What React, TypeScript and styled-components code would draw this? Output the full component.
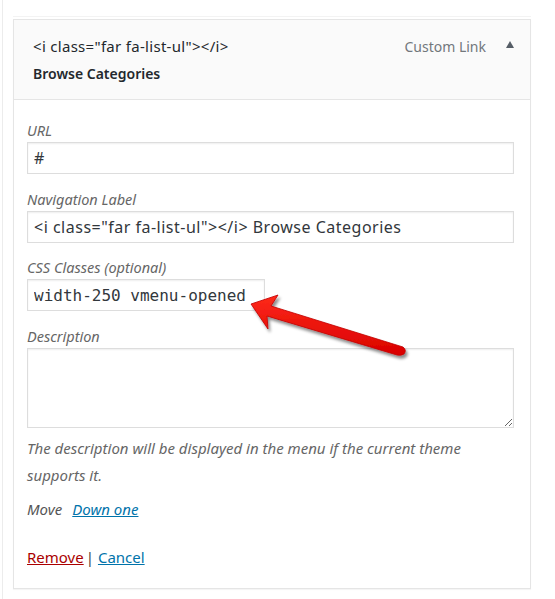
import React from 'react'
import styled, { createGlobalStyle } from 'styled-components'

const GlobalStyle = createGlobalStyle`
  html, body {
    margin: 0;
    padding: 0;
    background: #fff;
  }
  body {
    font-family: "Noto Sans", "Open Sans", sans-serif;
    color: #23282d;
  }
`

const Page = styled.div`
  width: 555px;
  height: 599px;
  box-sizing: border-box;
  border-left: 1px solid #ececec;
  margin-left: 2px;
  padding: 16px 0 0 10px;
`

const TopRule = styled.div`
  width: 518px;
  border-top: 1px solid #f3f3f3;
  margin-bottom: 2px;
`

const Card = styled.div`
  position: relative;
  width: 518px;
  box-sizing: border-box;
  border: 1px solid #e5e5e5;
  box-shadow: 0 1px 1px rgba(0, 0, 0, 0.04);
  background: #fff;
`

const Header = styled.div`
  display: flex;
  justify-content: space-between;
  align-items: flex-start;
  background: #fafafa;
  border-bottom: 1px solid #e5e5e5;
  padding: 13px 16px 12px 19px;
`

const Title = styled.div`
  font-size: 14px;
  line-height: 27px;
  font-weight: 600;
  color: #23282d;

  span {
    display: block;
    font-weight: 400;
    font-size: 15px;
    letter-spacing: 0.3px;
  }
`

const Meta = styled.div`
  display: flex;
  align-items: center;
  gap: 20px;
  font-size: 14px;
  line-height: 27px;
  color: #72777c;
`

const Caret = styled.span`
  width: 0;
  height: 0;
  border-left: 4.5px solid transparent;
  border-right: 4.5px solid transparent;
  border-bottom: 7px solid #555d66;
  margin-bottom: 4px;
`

const Body = styled.div`
  padding: 20px 16px 17px 13px;
`

const Field = styled.div<{ $gap?: number }>`
  display: flex;
  flex-direction: column;
  align-items: flex-start;
  margin-bottom: ${p => p.$gap ?? 15}px;
`

const Label = styled.label`
  font-size: 14.5px;
  font-style: italic;
  line-height: 20px;
  color: #666;
  margin-bottom: 2px;
`

const TextInput = styled.input<{ $mono?: boolean; $width?: number }>`
  box-sizing: border-box;
  width: ${p => p.$width ?? 487}px;
  height: 32px;
  border: 1px solid #ddd;
  box-shadow: inset 0 1px 2px rgba(0, 0, 0, 0.07);
  padding: 0 6px;
  font-family: ${p => (p.$mono ? '"DejaVu Sans Mono", "Liberation Mono", monospace' : '"Noto Sans", sans-serif')};
  font-size: 16px;
  letter-spacing: ${p => (p.$mono ? 0 : 0.5)}px;
  color: #32373c;
  background: #fff;
  outline: none;
`

const TextArea = styled.textarea`
  box-sizing: border-box;
  width: 487px;
  height: 80px;
  border: 1px solid #ddd;
  box-shadow: inset 0 1px 2px rgba(0, 0, 0, 0.07);
  padding: 6px;
  font-family: "Noto Sans", sans-serif;
  font-size: 16px;
  color: #32373c;
  outline: none;
`

const Help = styled.p`
  margin: 7px 0 7px;
  width: 450px;
  font-size: 15px;
  font-style: italic;
  line-height: 27px;
  color: #666;
`

const MoveRow = styled.div`
  display: flex;
  gap: 10px;
  font-size: 15px;
  font-style: italic;
  line-height: 27px;
  color: #555;
`

const Link = styled.a<{ $danger?: boolean }>`
  color: ${p => (p.$danger ? '#a00' : '#0073aa')};
  text-decoration: underline;
  cursor: pointer;
`

const Actions = styled.div`
  display: flex;
  margin-top: 21px;
  font-size: 15px;
  line-height: 27px;
  color: #555;
`

const Sep = styled.span`
  margin: 0 4px 0 2px;
  color: #444;
`

const Arrow = styled.svg`
  position: absolute;
  left: 226px;
  top: 265px;
  overflow: visible;
  pointer-events: none;
`

const App = () => {
  return (
    <>
      <GlobalStyle />
      <Page>
        <TopRule />
        <Card>
          <Header>
            <Title>
              <span>{'<i class="far fa-list-ul"></i>'}</span>
              Browse Categories
            </Title>
            <Meta>
              Custom Link
              <Caret />
            </Meta>
          </Header>

          <Body>
            <Field>
              <Label>URL</Label>
              <TextInput defaultValue="#" />
            </Field>
            <Field $gap={14}>
              <Label>Navigation Label</Label>
              <TextInput defaultValue={'<i class="far fa-list-ul"></i> Browse Categories'} />
            </Field>
            <Field>
              <Label>CSS Classes (optional)</Label>
              <TextInput $mono $width={238} defaultValue="width-250 vmenu-opened" />
            </Field>
            <Field $gap={0}>
              <Label>Description</Label>
              <TextArea />
            </Field>

            <Help>The description will be displayed in the menu if the current theme supports it.</Help>

            <MoveRow>
              Move <Link>Down one</Link>
            </MoveRow>

            <Actions>
              <Link $danger>Remove</Link>
              <Sep>|</Sep>
              <Link>Cancel</Link>
            </Actions>
          </Body>

          {/* red callout arrow pointing at the css classes field */}
          <Arrow width="175" height="80" viewBox="0 0 175 80">
            <defs>
              <linearGradient id="red" x1="0" y1="0" x2="0" y2="1">
                <stop offset="0" stopColor="#ff2a1a" />
                <stop offset="1" stopColor="#d80000" />
              </linearGradient>
              <filter id="shadow" x="-20%" y="-40%" width="140%" height="180%">
                <feDropShadow dx="2" dy="3" stdDeviation="1.6" floodColor="#000" floodOpacity="0.45" />
              </filter>
            </defs>
            <g filter="url(#shadow)">
              <path
                d="M11 19 L38 10 L31 21 L163 62 Q167 65 164 69 Q161 71 157 70 L27 31 L28 44 Z"
                fill="url(#red)"
                stroke="#c00000"
                strokeWidth="0.8"
                strokeLinejoin="round"
              />
            </g>
          </Arrow>
        </Card>
      </Page>
    </>
  )
}

export default App
